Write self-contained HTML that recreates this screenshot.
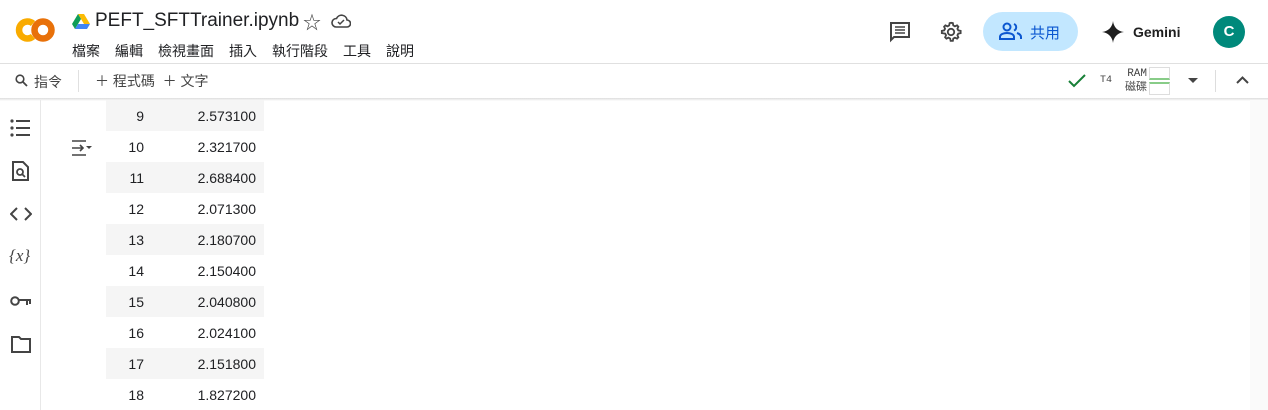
<!DOCTYPE html>
<html><head><meta charset="utf-8"><style>
*{margin:0;padding:0;box-sizing:border-box}
body{width:1268px;height:410px;overflow:hidden;background:#fff;font-family:"Liberation Sans","Noto Sans CJK TC",sans-serif;color:#1f1f1f;position:relative}
.abs{position:absolute}
.menu span{margin-right:15px}
.row{position:absolute;left:106px;width:158px;height:31px;font-size:14px;color:#202124}
.row .n{position:absolute;right:120px;top:8px}
.row .v{position:absolute;right:8px;top:8px}
.sh{background:#f5f5f5}
</style></head><body>
<!-- logo -->
<svg class="abs" style="left:14px;top:16px" width="42" height="28" viewBox="0 0 42 28">
<circle cx="29" cy="14" r="8.5" fill="none" stroke="#e8710a" stroke-width="6.5"/>
<path d="M19 7.5A8.5 8.5 0 1 0 19 20.5" fill="none" stroke="#f9ab00" stroke-width="6.5"/>
</svg>
<svg class="abs" style="left:72px;top:14px" width="18" height="15" viewBox="0 0 18 15"><path d="M6 0h6l6 10h-6z" fill="#fbbc04"/><path d="M6 0L0 10l3 5 6-10z" fill="#0f9d58"/><path d="M3 15h12l3-5H6z" fill="#4285f4"/></svg>
<div class="abs" style="left:95px;top:10px;font-size:19px;color:#202124">PEFT_SFTTrainer.ipynb</div>
<div class="abs" style="left:303px;top:9px;font-size:18px;color:#444">☆</div>
<svg class="abs" style="left:331px;top:13px" width="20" height="16" viewBox="0 0 20 16"><path d="M5 14h11a3.5 3.5 0 0 0 0-7 5.5 5.5 0 0 0-10.5-1.5A4 4 0 0 0 5 14z" fill="none" stroke="#444" stroke-width="1.6"/><path d="M7 9l2 2 4-4" fill="none" stroke="#444" stroke-width="1.5"/></svg>
<div class="abs menu" style="left:72px;top:41px;font-size:14px;color:#202124"><span>檔案</span><span>編輯</span><span>檢視畫面</span><span>插入</span><span>執行階段</span><span>工具</span><span>說明</span></div>
<!-- right header -->
<svg class="abs" style="left:889px;top:21px" width="22" height="22" viewBox="0 0 22 22"><path d="M2 2h18v14H5l-3 3z" fill="none" stroke="#444" stroke-width="2"/><path d="M6 6h10M6 9h10M6 12h10" stroke="#444" stroke-width="1.6"/></svg>
<svg class="abs" style="left:940px;top:21px" width="22" height="22" viewBox="0 0 24 24"><path d="M12 2l2 .3.5 2.5 1.8 1 2.3-1 1.4 1.4-1 2.3 1 1.8 2.5.5v2.4l-2.5.5-1 1.8 1 2.3-1.4 1.4-2.3-1-1.8 1-.5 2.5h-2.4l-.5-2.5-1.8-1-2.3 1-1.4-1.4 1-2.3-1-1.8L2 13.2v-2.4l2.5-.5 1-1.8-1-2.3 1.4-1.4 2.3 1 1.8-1 .5-2.5z" fill="none" stroke="#444" stroke-width="2"/><circle cx="12" cy="12" r="3.5" fill="none" stroke="#444" stroke-width="2"/></svg>
<div class="abs" style="left:983px;top:12px;width:95px;height:39px;border-radius:20px;background:#c2e7ff"></div>
<svg class="abs" style="left:999px;top:22px" width="24" height="19" viewBox="0 0 24 19"><circle cx="8" cy="5" r="3.5" fill="none" stroke="#0b57d0" stroke-width="2"/><path d="M1 17v-2c0-3 4-4 7-4s7 1 7 4v2z" fill="none" stroke="#0b57d0" stroke-width="2"/><path d="M15 2a3.5 3.5 0 0 1 0 6.5M18 11c2 .7 4 2 4 4v2" fill="none" stroke="#0b57d0" stroke-width="2"/></svg>
<div class="abs" style="left:1030px;top:22px;font-size:15px;color:#0b57d0">共用</div>
<svg class="abs" style="left:1102px;top:21px" width="22" height="22" viewBox="0 0 22 22"><path d="M11 0C11.5 6 16 10.5 22 11 16 11.5 11.5 16 11 22 10.5 16 6 11.5 0 11 6 10.5 10.5 6 11 0z" fill="#1f1f1f"/></svg>
<div class="abs" style="left:1133px;top:24px;font-size:14px;font-weight:600;color:#1f1f1f">Gemini</div>
<div class="abs" style="left:1213px;top:16px;width:32px;height:32px;border-radius:50%;background:#00897b;color:#fff;font-size:15px;text-align:center;line-height:32px;font-weight:bold">C</div>
<!-- toolbar -->
<div class="abs" style="left:0;top:63px;width:1268px;height:1px;background:#e0e0e0"></div>
<div class="abs" style="left:0;top:98px;width:1268px;height:3px;background:linear-gradient(#ddd,#fff)"></div>
<svg class="abs" style="left:15px;top:74px" width="13" height="13" viewBox="0 0 13 13"><circle cx="5" cy="5" r="3.8" fill="none" stroke="#444" stroke-width="1.6"/><path d="M8 8l4 4" stroke="#444" stroke-width="1.8"/></svg>
<div class="abs" style="left:34px;top:72px;font-size:14px;color:#444">指令</div>
<div class="abs" style="left:78px;top:70px;width:1px;height:22px;background:#e0e0e0"></div>
<div class="abs" style="left:95px;top:71px;font-size:14px;color:#444">＋ 程式碼 &nbsp;＋ 文字</div>
<svg class="abs" style="left:1068px;top:74px" width="18" height="14" viewBox="0 0 18 14"><path d="M1 7l5 5L17 1" fill="none" stroke="#188038" stroke-width="2"/></svg>
<div class="abs" style="left:1100px;top:75px;font-size:10px;font-family:'Liberation Mono',monospace;color:#444">T4</div>
<div class="abs" style="left:1122px;top:67px;font-size:11px;font-family:'Liberation Mono','Noto Sans CJK TC',monospace;color:#444;line-height:14px;text-align:right;width:25px">RAM<br>磁碟</div>
<div class="abs" style="left:1149px;top:67px;width:21px;height:13px;border:1px solid #ddd;border-bottom:2px solid #8c8"></div>
<div class="abs" style="left:1149px;top:82px;width:21px;height:13px;border:1px solid #ddd;border-top:2px solid #8c8"></div>
<div class="abs" style="left:1188px;top:78px;width:0;height:0;border-left:5px solid transparent;border-right:5px solid transparent;border-top:5px solid #444"></div>
<div class="abs" style="left:1215px;top:70px;width:1px;height:22px;background:#ddd"></div>
<svg class="abs" style="left:1236px;top:76px" width="13" height="8" viewBox="0 0 13 8"><path d="M1 7l5.5-5.5L12 7" fill="none" stroke="#444" stroke-width="2"/></svg>
<!-- sidebar -->
<div class="abs" style="left:40px;top:100px;width:1px;height:310px;background:#e8e8e8"></div>
<div class="abs" style="left:1250px;top:100px;width:18px;height:310px;background:#fafafa"></div>
<svg class="abs" style="left:10px;top:118px" width="21" height="20" viewBox="0 0 21 20"><circle cx="2" cy="3" r="1.6" fill="#444"/><circle cx="2" cy="10" r="1.6" fill="#444"/><circle cx="2" cy="17" r="1.6" fill="#444"/><path d="M6 3h14M6 10h14M6 17h14" stroke="#444" stroke-width="2"/></svg>
<svg class="abs" style="left:12px;top:161px" width="17" height="20" viewBox="0 0 17 20"><path d="M1 1h10l5 5v13H1z" fill="none" stroke="#444" stroke-width="2"/><circle cx="8" cy="11" r="3" fill="none" stroke="#444" stroke-width="1.8"/><path d="M10 13l3 3" stroke="#444" stroke-width="1.8"/></svg>
<svg class="abs" style="left:10px;top:207px" width="22" height="14" viewBox="0 0 22 14"><path d="M7 1L1 7l6 6M15 1l6 6-6 6" fill="none" stroke="#444" stroke-width="2"/></svg>
<div class="abs" style="left:9px;top:246px;font-size:17px;font-family:'Liberation Serif',serif;font-style:italic;color:#444">{<i>x</i>}</div>
<svg class="abs" style="left:10px;top:295px" width="22" height="12" viewBox="0 0 22 12"><circle cx="5" cy="6" r="3.8" fill="none" stroke="#444" stroke-width="2"/><path d="M9 5h12M17 5v5M20 5v4" stroke="#444" stroke-width="2"/></svg>
<svg class="abs" style="left:11px;top:336px" width="20" height="17" viewBox="0 0 20 17"><path d="M1 1h7l2 2h9v13H1z" fill="none" stroke="#444" stroke-width="2"/></svg>
<svg class="abs" style="left:71px;top:140px" width="21" height="16" viewBox="0 0 21 16"><path d="M1 1h14M1 15h14M1 8h11M9 5l3 3-3 3" fill="none" stroke="#444" stroke-width="1.6"/><path d="M15 6h6l-3 3z" fill="#444"/></svg>
<!-- table -->
<div class="row sh" style="top:100px"><span class="n">9</span><span class="v">2.573100</span></div>
<div class="row" style="top:131px"><span class="n">10</span><span class="v">2.321700</span></div>
<div class="row sh" style="top:162px"><span class="n">11</span><span class="v">2.688400</span></div>
<div class="row" style="top:193px"><span class="n">12</span><span class="v">2.071300</span></div>
<div class="row sh" style="top:224px"><span class="n">13</span><span class="v">2.180700</span></div>
<div class="row" style="top:255px"><span class="n">14</span><span class="v">2.150400</span></div>
<div class="row sh" style="top:286px"><span class="n">15</span><span class="v">2.040800</span></div>
<div class="row" style="top:317px"><span class="n">16</span><span class="v">2.024100</span></div>
<div class="row sh" style="top:348px"><span class="n">17</span><span class="v">2.151800</span></div>
<div class="row" style="top:379px"><span class="n">18</span><span class="v">1.827200</span></div>
</body></html>
